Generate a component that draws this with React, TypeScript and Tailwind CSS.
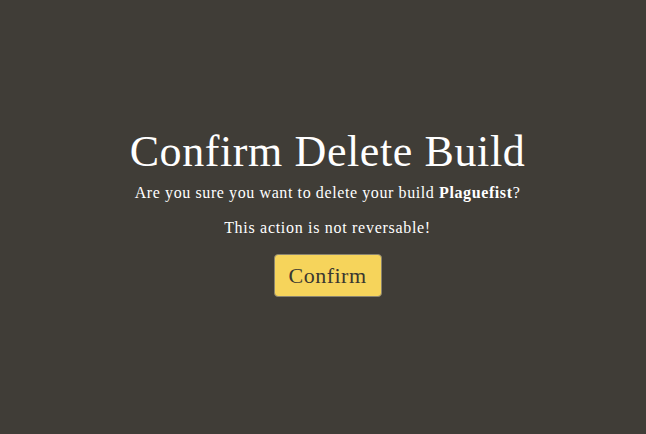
export default function App() {
  return (
    <div
      className="w-full h-screen bg-[#403d37] flex flex-col items-center justify-center text-white pl-[9px] pb-[9px]"
      style={{ fontFamily: '"Liberation Serif", "DejaVu Serif", serif' }}
    >
      <h1 className="text-[44px] leading-[48px] tracking-[0.6px]">Confirm Delete Build</h1>
      <p className="mt-[7px] text-[16px] leading-[20px] tracking-[0.6px]">
        Are you sure you want to delete your build <span className="font-bold">Plaguefist</span>?
      </p>
      <p className="mt-[15px] text-[16px] leading-[20px] tracking-[0.7px]">This action is not reversable!</p>
      <button className="mt-[16px] w-[108px] h-[43px] rounded-[4px] bg-[#f6d45b] border border-[#8a8470] text-[#3a3730] text-[22px] tracking-[0.5px]">
        Confirm
      </button>
    </div>
  );
}
